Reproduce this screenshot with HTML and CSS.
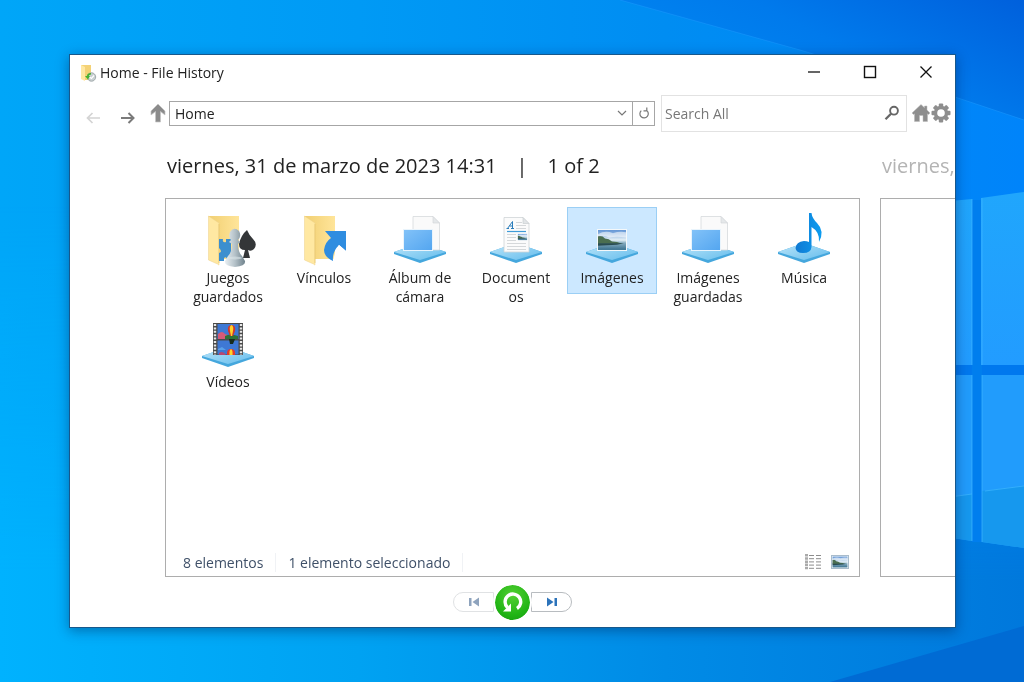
FILE: index.html
```html
<!DOCTYPE html>
<html lang="es">
<head>
<meta charset="utf-8">
<title>Home - File History</title>
<link rel="stylesheet" href="styles.css">
</head>
<body class="desktop">
<svg class="wallpaper" viewBox="0 0 1024 682" preserveAspectRatio="none" aria-hidden="true">
  <defs>
    <linearGradient id="sky" x1="0" y1="0" x2="1" y2="0">
      <stop offset="0" stop-color="#00a6f8"/><stop offset=".35" stop-color="#009af5"/><stop offset=".65" stop-color="#008df2"/><stop offset="1" stop-color="#0084fa"/>
    </linearGradient>
    <linearGradient id="corner" x1="0" y1=".6" x2="1" y2="0">
      <stop offset="0" stop-color="#0089f2"/><stop offset=".5" stop-color="#007aec"/><stop offset="1" stop-color="#0060dc"/>
    </linearGradient>
    <linearGradient id="floor" x1="0" y1="0" x2="1" y2="0">
      <stop offset="0" stop-color="#00b2fe"/><stop offset=".35" stop-color="#00a2f2"/><stop offset=".65" stop-color="#008be6"/><stop offset="1" stop-color="#0078dc"/>
    </linearGradient>
    <linearGradient id="fade" x1="0" y1="0" x2="0" y2="1">
      <stop offset=".3" stop-color="#fff" stop-opacity="0"/><stop offset=".85" stop-color="#fff"/>
    </linearGradient>
    <mask id="low"><rect width="1024" height="682" fill="url(#fade)"/></mask>
    <linearGradient id="glass" x1="0" y1="0" x2="0" y2="1">
      <stop offset="0" stop-color="#20a6fc"/><stop offset="1" stop-color="#229cff"/>
    </linearGradient>
  </defs>
  <rect width="1024" height="682" fill="url(#sky)"/>
  <rect width="1024" height="682" fill="url(#floor)" mask="url(#low)"/>
  <path d="M620 0H1024V120L955 97 800 50Z" fill="url(#corner)"/>
  <path d="M620 0L800 50 955 97 1024 120" fill="none" stroke="#209cff" stroke-opacity=".45"/>
  <path d="M1024 626L830 682H1024Z" fill="#006bd4"/>
  <rect x="950" y="365" width="74" height="10" fill="#0078ee"/>
  <rect x="972" y="200" width="10" height="342" fill="#007eee"/>
  <path d="M940 202L972 199V365H940ZM981 198L1024 192V365H981Z" fill="url(#glass)"/>
  <path d="M940 375H972V541L940 536ZM982 375H1024V548L982 542Z" fill="#219cfc"/>
  <path d="M940 498L972 494V541L940 536ZM982 491L1024 486V548L982 542Z" fill="#1698ee"/>
  <path d="M972 199V365M972 375V541M982 198V365M982 375V542M950 497L972 494M985 491L1024 486" fill="none" stroke="#3fb6ff" stroke-opacity=".7"/>
</svg>

<svg width="0" height="0" class="defs" aria-hidden="true">
  <defs>
    <linearGradient id="base" x1="0" y1="0" x2="1" y2="1"><stop offset="0" stop-color="#bce6fa"/><stop offset="1" stop-color="#64bcec"/></linearGradient>
    <linearGradient id="blue" x1="0" y1="0" x2="1" y2="1"><stop offset="0" stop-color="#82c2f8"/><stop offset="1" stop-color="#54a6f0"/></linearGradient>
    <linearGradient id="fold" x1="0" y1="0" x2="1" y2="0"><stop offset="0" stop-color="#f1cf72"/><stop offset="1" stop-color="#ffe59a"/></linearGradient>
    <linearGradient id="pawn" x1="0" y1="0" x2="1" y2="0"><stop offset="0" stop-color="#e9eff2"/><stop offset=".5" stop-color="#b4c1c8"/><stop offset="1" stop-color="#6f828c"/></linearGradient>
    <linearGradient id="scene" x1="0" y1="0" x2="0" y2="1"><stop offset="0" stop-color="#5e92d4"/><stop offset=".5" stop-color="#e4f0f6"/><stop offset=".65" stop-color="#86acc0"/><stop offset="1" stop-color="#38708e"/></linearGradient>
    <linearGradient id="note" x1="0" y1="0" x2="1" y2="0"><stop offset="0" stop-color="#1079d2"/><stop offset="1" stop-color="#0c9cf0"/></linearGradient>
    <symbol id="platform" viewBox="0 0 56 58">
      <path d="M2 43L28 34 54 43V45L28 54 2 45Z" fill="#45a7dd"/>
      <path d="M2 43L28 34 54 43 28 51Z" fill="url(#base)"/>
    </symbol>
    <symbol id="folder" viewBox="0 0 56 58">
      <path d="M8.500 7H39V50H19Z" fill="url(#fold)"/>
      <path d="M8.500 7L19 14V56Q18.500 56 17.500 55L8.500 51Z" fill="#ffe8a2" stroke="#ecd08a" stroke-width=".5"/>
      <path d="M19 15V54" stroke="#e6c46c" stroke-width=".7"/>
    </symbol>
    <symbol id="sheets" viewBox="0 0 56 58">
      <path d="M21 7.500H41L47.500 14V41H21Z" fill="#fafafa" stroke="#d5d9dc" stroke-width=".8"/>
      <path d="M41 7.500V14H47.500Z" fill="#e5e8ea" stroke="#d0d4d7" stroke-width=".6"/>
      <rect x="11" y="20" width="30" height="22" fill="#e9f4fc"/>
      <rect x="12" y="21" width="28" height="20" fill="url(#blue)"/>
    </symbol>
    <symbol id="photo" viewBox="0 0 30 21" preserveAspectRatio="none">
      <rect width="30" height="21" fill="#f4f8fa"/>
      <rect x="1" y="1" width="28" height="19" fill="url(#scene)"/>
      <path d="M1 7Q5 6 8 9 12 9 15 12 20 12 25 14H1Z" fill="#4b6e50"/>
      <path d="M1 13.500H27L20 15 1 16Z" fill="#294b50"/>
      <path d="M1 5Q8 1 16 4 22 2 29 3V8Q20 7 12 8 8 6 1 7Z" fill="#fff" opacity=".55"/>
    </symbol>
  </defs>
</svg>

<main class="window">
  <header class="titlebar">
    <svg class="app-icon" viewBox="0 0 17 18" aria-hidden="true">
      <path d="M1 1H11V16H5Z" fill="#f4d276"/><path d="M1 1L5 3V17L1 15Z" fill="#ffe8a2"/>
      <circle cx="11.500" cy="13" r="4.200" fill="#c9d0d2" stroke="#a2abad"/>
      <path d="M9.500 13L11.500 14.500 14 11.500" fill="none" stroke="#fff" stroke-width="1.200"/>
      <path d="M11 9Q7 9 7 12H5L8 15.500 10 12H8.700Q9 10.500 11 10.500Z" fill="#46b22f"/>
    </svg>
    <h1 class="title">Home - File History</h1>
    <div class="caption">
      <button class="caption-button" aria-label="Minimize"><svg width="14" height="14" viewBox="0 0 14 14"><path d="M1 7H13" stroke="#111" stroke-width="1.300"/></svg></button>
      <button class="caption-button" aria-label="Maximize"><svg width="14" height="14" viewBox="0 0 14 14"><rect x="1.500" y="1.500" width="11" height="11" fill="none" stroke="#111" stroke-width="1.400"/></svg></button>
      <button class="caption-button" aria-label="Close"><svg width="14" height="14" viewBox="0 0 14 14"><path d="M1.500 1.500L12.500 12.500M12.500 1.500L1.500 12.500" stroke="#111" stroke-width="1.300"/></svg></button>
    </div>
  </header>

  <nav class="toolbar">
    <div class="history">
      <button class="plain" aria-label="Back" disabled><svg width="16" height="14" viewBox="0 0 16 14"><path d="M15 7H2.500M7.500 2L2.500 7 7.500 12" fill="none" stroke="#d4d4d4" stroke-width="1.700"/></svg></button>
      <button class="plain" aria-label="Forward"><svg width="16" height="14" viewBox="0 0 16 14"><path d="M1 7H13.500M8.500 2L13.500 7 8.500 12" fill="none" stroke="#7a7a7a" stroke-width="2"/></svg></button>
    </div>
    <button class="plain up" aria-label="Up"><svg width="16" height="20" viewBox="0 0 16 20"><path d="M8 1L15 8V12L10.500 8.500V19H5.500V8.500L1 12V8Z" fill="#8b8b8b" stroke="#c6c6c6" stroke-width=".7"/></svg></button>
    <div class="address">
      <input class="address-input" type="text" value="Home" aria-label="Address">
      <button class="address-button" aria-label="Previous locations"><svg width="10" height="8" viewBox="0 0 10 8"><path d="M1 2L5 6 9 2" fill="none" stroke="#777" stroke-width="1.200"/></svg></button>
      <button class="address-button refresh" aria-label="Refresh"><svg width="12" height="13" viewBox="0 0 12 13"><path d="M8.500 3.300A4.200 4.200 0 1 1 3.300 3.600M8.800 .5V3.800H5.500" fill="none" stroke="#777" stroke-width="1.200"/></svg></button>
    </div>
    <div class="search">
      <input class="search-input" type="text" placeholder="Search All" aria-label="Search All">
      <button class="plain" aria-label="Search"><svg width="16" height="16" viewBox="0 0 16 16"><circle cx="10" cy="5.700" r="3.900" fill="none" stroke="#666" stroke-width="1.900"/><path d="M7 8.700L1.500 14.200" stroke="#666" stroke-width="2.300"/></svg></button>
    </div>
    <button class="plain" aria-label="Home"><svg width="20" height="20" viewBox="0 0 20 20"><path d="M10 1.500L13.500 4.800V3H16V7L19 10 17.500 11.500 16.500 10.800V18.500H12V12.500H8.500V18.500H3.500V10.800L2.500 11.500 1 10Z" fill="#8e8e8e" stroke="#b8b8b8" stroke-width=".5"/></svg></button>
    <button class="plain" aria-label="Settings"><svg width="20" height="20" viewBox="0 0 20 20"><g fill="#8e8e8e"><g id="teeth"><rect x="7.800" y=".5" width="4.400" height="19" rx="1"/><rect x=".5" y="7.800" width="19" height="4.400" rx="1"/></g><use href="#teeth" transform="rotate(45 10 10)"/><circle cx="10" cy="10" r="7.200"/></g><circle cx="10" cy="10" r="3.800" fill="#fff"/></svg></button>
  </nav>

  <div class="versions">
    <section class="version">
      <h2 class="stamp"><span>viernes, 31 de marzo de 2023 14:31</span><span>|</span><span>1 of 2</span></h2>
      <div class="pane">
        <div class="items">
          <button class="item">
            <svg class="icon" viewBox="0 0 56 58"><use href="#folder"/>
              <path d="M19 30H23Q22 34 26 33V30H31V51H27Q27 47 24 49V52H19V44Q23 43 19 39Z" fill="#3c8fcf"/>
              <path d="M47 21Q49 26 53 30 58 35 54 40 51 43 48 41L50 49H43L45 41Q39 41 39 35 41 26 47 21Z" fill="#343638"/>
              <path d="M31 31Q28 28 30 23 34 17 39 22 42 27 38 31L40 33 38 35Q38 43 42 47L45 52Q46 57 35 58 24 57 25 52L28 47Q32 43 32 35L29 33Z" fill="url(#pawn)"/>
              <ellipse cx="35" cy="49" rx="7" ry="1.500" fill="#dbe4e8" opacity=".6"/>
            </svg>
            <span class="label">Juegos guardados</span>
          </button>
          <button class="item">
            <svg class="icon" viewBox="0 0 56 58"><use href="#folder"/>
              <path d="M29 22H50V42L43 36Q36 43 37 52 28 48 28 41 29 33 35 29Z" fill="#2f8de0"/>
              <path d="M43 36L39 44 37 52H43L50 46V42Z" fill="#fff"/>
            </svg>
            <span class="label">Vínculos</span>
          </button>
          <button class="item">
            <svg class="icon" viewBox="0 0 56 58"><use href="#platform"/><use href="#sheets"/></svg>
            <span class="label">Álbum de cámara</span>
          </button>
          <button class="item">
            <svg class="icon" viewBox="0 0 56 58"><use href="#platform"/>
              <path d="M16 8.500H35L41 14.500V43H16Z" fill="#fbfbfb" stroke="#cfd4d7" stroke-width=".8"/>
              <path d="M35 8.500V14.500H41Z" fill="#e2e5e7" stroke="#c5cacd" stroke-width=".6"/>
              <path d="M19.500 19.500L24.500 12.500V19.500M21.500 17H24.500M18.500 19.500H21M23 19.500H26" fill="none" stroke="#2a7dbb"/>
              <path d="M28 13.500H34M28 16.500H38M28 19.500H38M19 25.500H28M19 28.500H28M19 31.500H28M19 34.500H38M19 37.500H38M19 40.500H38" stroke="#d0d4d6" stroke-width=".9"/>
              <path d="M19 22.500H38" stroke="#3e9bd8" stroke-width="1.200"/>
              <use href="#photo" x="29.500" y="24.500" width="10" height="7"/>
            </svg>
            <span class="label">Documentos</span>
          </button>
          <button class="item selected" aria-pressed="true">
            <svg class="icon" viewBox="0 0 56 58"><use href="#platform"/><use href="#photo" x="13" y="20" width="30" height="22"/></svg>
            <span class="label">Imágenes</span>
          </button>
          <button class="item">
            <svg class="icon" viewBox="0 0 56 58"><use href="#platform"/><use href="#sheets"/></svg>
            <span class="label">Imágenes guardadas</span>
          </button>
          <button class="item">
            <svg class="icon" viewBox="0 0 56 58"><use href="#platform"/>
              <path d="M33 4H35.500Q36 9 41 14 49 22 43 33 44 23 35.500 18V38Q35 44 27 44 20 44 19.500 39 20 33 28 32 31 32 33 33Z" fill="url(#note)"/>
            </svg>
            <span class="label">Música</span>
          </button>
          <button class="item">
            <svg class="icon" viewBox="0 0 56 58"><use href="#platform"/>
              <rect x="13" y="10" width="30" height="32" fill="#4a4a4a"/>
              <path d="M15 11V42M41 11V42" stroke="#e8e8e8" stroke-width="2.400" stroke-dasharray="2 1.400"/>
              <rect x="17.500" y="11" width="21" height="15" fill="#3e78d4"/><rect x="17.500" y="27.500" width="21" height="14" fill="#3e78d4"/>
              <path d="M18 21Q22 17 25 21L30 23V26H18Z" fill="#d65a78"/><path d="M25 23Q30 20 38 23V26H25Z" fill="#2e7135"/>
              <path d="M28 18Q27 12 31.500 12 36 12 35 18L33 23H30Z" fill="#d2362a"/><path d="M30 18Q29 13 31.500 12 34 13 33 18L32 23H31Z" fill="#ffd42a"/>
              <path d="M29 26H35L33 31H30Z" fill="#182c1c"/><path d="M18 36L22 34 26 37H18Z" fill="#5aa0e8"/>
              <path d="M27 40Q27 36 31 36 35 36 35 40V42H27Z" fill="#e3392c"/><path d="M29.500 42Q29 37 31 36 33 37 32.500 42Z" fill="#ffd42a"/><path d="M19 40Q23 37 26 42H19Z" fill="#b84772"/>
            </svg>
            <span class="label">Vídeos</span>
          </button>
        </div>
        <footer class="status">
          <span class="status-text">8 elementos</span>
          <span class="status-text">1 elemento seleccionado</span>
          <span class="views">
            <button class="plain" aria-label="Details"><svg width="18" height="16" viewBox="0 0 18 16"><path d="M2.500 0V16" stroke="#aaa" stroke-width="3" stroke-dasharray="2.500 .7"/><path d="M5 1.500H10M12 1.500H17M5 4.700H10M12 4.700H17M5 7.900H10M12 7.900H17M5 11.100H10M12 11.100H17M5 14.300H10M12 14.300H17" stroke="#8c8c8c"/></svg></button>
            <button class="plain" aria-label="Large icons"><svg width="18" height="14" viewBox="0 0 18 14"><rect width="18" height="14" fill="#a9bccb"/><use href="#photo" x="1" y="1" width="16" height="12"/></svg></button>
          </span>
        </footer>
      </div>
    </section>
    <section class="version older">
      <h2 class="stamp">viernes,</h2>
      <div class="pane"></div>
    </section>
  </div>

  <div class="pager">
    <button class="pager-button previous" aria-label="Previous version" disabled><svg width="12" height="10" viewBox="0 0 12 10"><path d="M1 1H3.500V9H1ZM11 .5V9.500L4.500 5Z" fill="#8ea3bd"/></svg></button>
    <button class="restore" aria-label="Restore"><svg width="24" height="24" viewBox="0 0 24 24"><path d="M16 18.500A7.800 7.800 0 1 0 6.500 17.500" fill="none" stroke="#fff" stroke-width="3.400"/><path d="M10 13.500V21.500H2Z" fill="#fff"/></svg></button>
    <button class="pager-button next" aria-label="Next version"><svg width="12" height="10" viewBox="0 0 12 10"><path d="M8.500 1H11V9H8.500ZM1 .5V9.500L7.500 5Z" fill="#2c73ba"/></svg></button>
  </div>
</main>
</body>
</html>
```
FILE: styles.css
```css
* { box-sizing: border-box; }

button, input {
  margin: 0;
  padding: 0;
  border: 0;
  background: none;
  color: inherit;
  font: inherit;
}

svg { display: block; }

.desktop {
  display: flex;
  min-height: 100vh;
  margin: 0;
  padding: 54px 68px 54px 69px;
  background: #0096f2;
  color: #222;
  font: 14px/19px "Open Sans", "Noto Sans", sans-serif;
}

.wallpaper {
  position: fixed;
  inset: 0;
  z-index: -1;
  width: 100%;
  height: 100%;
}

.defs { position: absolute; }

.window {
  display: flex;
  flex: 1;
  flex-direction: column;
  min-width: 0;
  border: 1px solid #17588c;
  background: #fff;
  box-shadow: 0 3px 12px rgba(0, 20, 70, .4);
}

.titlebar {
  display: flex;
  align-items: center;
  height: 35px;
  padding-left: 10px;
}

.app-icon { width: 17px; height: 18px; }

.title {
  flex: 1;
  margin: 0 0 0 3px;
  font-size: 14px;
  font-weight: 400;
}

.caption { display: flex; padding: 0 1px 1px 0; }

.caption-button {
  display: grid;
  place-items: center;
  width: 56px;
  height: 32px;
}

.toolbar {
  display: flex;
  align-items: center;
  height: 46px;
  padding: 0 4px 0 15px;
}

.history {
  display: flex;
  gap: 19px;
  padding-top: 10px;
}

.up { margin: 0 3px 0 14px; }

.address {
  display: flex;
  flex: 1;
  height: 25px;
  min-width: 0;
  margin-right: 6px;
  border: 1px solid #a6a6a6;
}

.address-input {
  flex: 1;
  min-width: 0;
  padding-left: 5px;
}

.address-button {
  display: grid;
  place-items: center;
  width: 20px;
}

.refresh { width: 22px; border-left: 1px solid #a6a6a6; }

.search {
  display: flex;
  flex: 0 1 246px;
  align-items: center;
  height: 37px;
  min-width: 0;
  margin-right: 4px;
  padding: 0 6px 0 3px;
  border: 1px solid #e2e2e2;
}

.search-input { flex: 1; min-width: 0; }
.search-input::placeholder { color: #777; opacity: 1; }

.versions {
  display: flex;
  flex: 1;
  gap: 20px;
  padding-left: 95px;
  overflow: hidden;
}

.version {
  display: flex;
  flex: 0 0 calc(100% - 95px);
  flex-direction: column;
}

.stamp {
  display: flex;
  gap: 20px;
  margin: 0;
  padding: 15px 0 18px 2px;
  font-size: 20px;
  font-weight: 400;
  line-height: 29px;
  white-space: nowrap;
}

.older .stamp { color: #b4b4b4; }

.pane {
  display: flex;
  flex: 1;
  flex-direction: column;
  border: 1px solid #adadad;
}

.items {
  display: grid;
  flex: 1;
  grid-template-columns: repeat(auto-fill, 90px);
  grid-auto-rows: 104px;
  gap: 0 6px;
  align-items: start;
  padding: 8px 0 0 17px;
}

.item {
  display: flex;
  flex-direction: column;
  align-items: center;
  padding: 1px 9px 6px;
  border: 1px solid transparent;
}

.selected { border-color: #9bcff5; background: #cce8ff; }

.icon { width: 56px; height: 58px; }

.label {
  max-width: 70px;
  padding-top: 1px;
  overflow-wrap: anywhere;
  text-align: center;
}

.status {
  display: flex;
  align-items: center;
  height: 28px;
  padding: 0 10px 0 5px;
  color: #3f5068;
}

.status-text { padding: 0 12px; border-right: 1px solid #f0f2f5; }

.views {
  display: flex;
  gap: 9px;
  align-items: center;
  margin-left: auto;
}

.pager {
  display: flex;
  align-items: center;
  justify-content: center;
  height: 50px;
}

.pager-button {
  display: grid;
  place-items: center;
  width: 41px;
  height: 20px;
  border: 1px solid #b8bcc0;
}

.previous { border-color: #e0e2e4; border-radius: 10px 0 0 10px; }
.next { border-radius: 0 10px 10px 0; }

.restore {
  z-index: 1;
  display: grid;
  place-items: center;
  width: 39px;
  height: 39px;
  margin: 0 -1px;
  border: 2px solid #fff;
  border-radius: 50%;
  background: radial-gradient(circle at 50% 30%, #52d033, #20b414 65%, #159a10) padding-box;
}
```
